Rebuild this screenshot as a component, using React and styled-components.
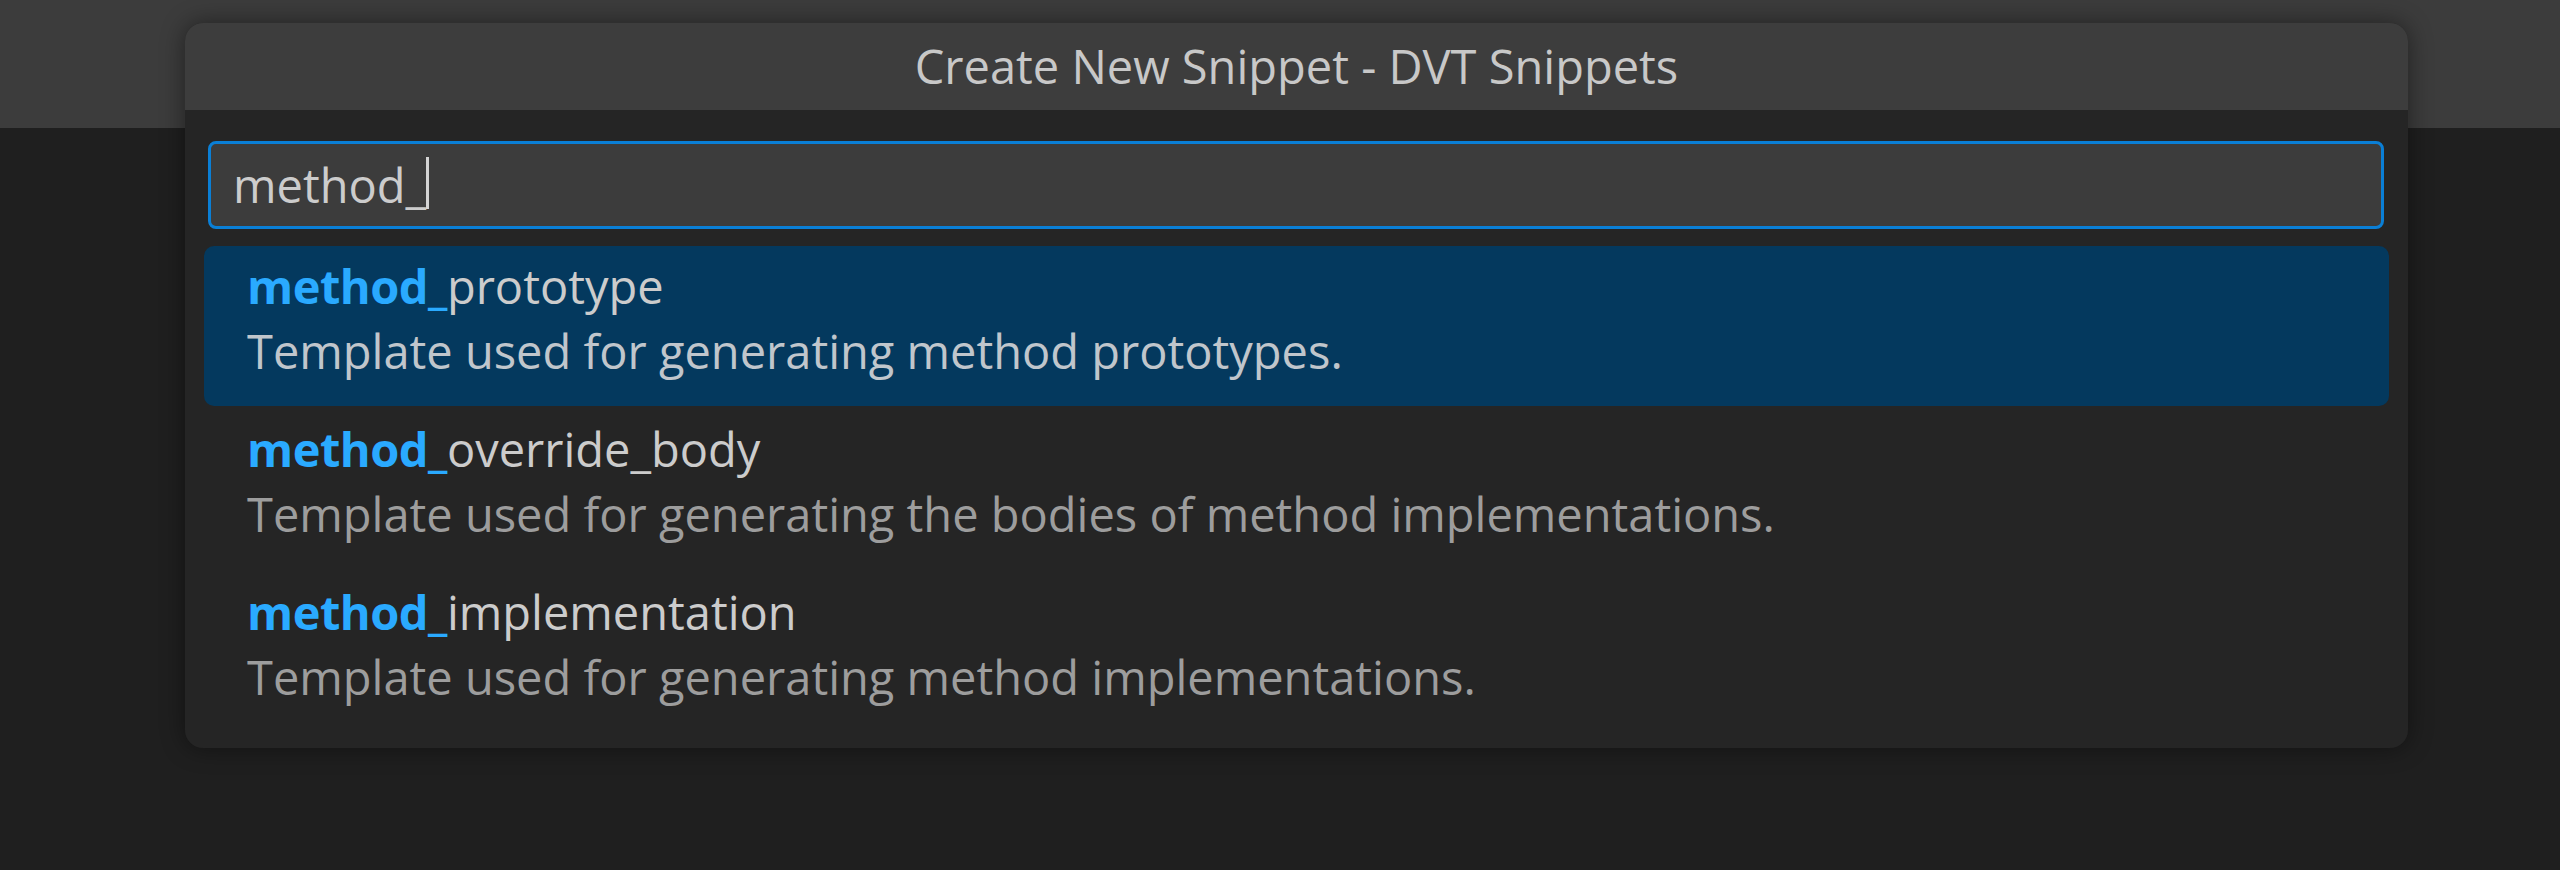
import React from 'react';
import styled, { createGlobalStyle } from 'styled-components';

const GlobalStyle = createGlobalStyle`
  html, body {
    margin: 0;
    padding: 0;
    background: #1f1f1f;
  }
  body {
    font-family: "Open Sans", "Noto Sans", sans-serif;
  }
`;

const Workbench = styled.div`
  position: relative;
  width: 2560px;
  height: 870px;
  display: flex;
  flex-direction: column;
  overflow: hidden;
`;

const TitleBar = styled.div`
  height: 128px;
  background: #3c3c3c;
`;

const Editor = styled.div`
  flex: 1;
  background: #1f1f1f;
`;

const QuickInput = styled.div`
  position: absolute;
  top: 23px;
  left: 185px;
  width: 2223px;
  height: 725px;
  display: flex;
  flex-direction: column;
  background: #252525;
  border-radius: 18px;
  overflow: hidden;
  box-shadow: 0 0 24px rgba(0, 0, 0, 0.45);
`;

const Header = styled.div`
  height: 87px;
  line-height: 87px;
  background: #3d3d3d;
  color: #c8c8c8;
  font-size: 47px;
  text-align: center;
`;

const Body = styled.div`
  display: flex;
  flex-direction: column;
  padding: 31px 19px 0 19px;
`;

const InputBox = styled.div`
  height: 82px;
  margin: 0 5px 17px 4px;
  display: flex;
  align-items: center;
  padding-left: 22px;
  background: #3c3c3c;
  border: 3px solid #0a7fd6;
  border-radius: 8px;
  color: #cccccc;
  font-size: 47px;
  line-height: 82px;
`;

const Caret = styled.span`
  display: inline-block;
  width: 3px;
  height: 52px;
  margin-top: -4px;
  background: #d4d4d4;
`;

const List = styled.div`
  display: flex;
  flex-direction: column;
  gap: 3px;
`;

const Row = styled.div`
  height: 160px;
  box-sizing: border-box;
  padding: 8px 0 0 43px;
  border-radius: 10px;
  background: ${p => (p.$selected ? '#04395e' : 'transparent')};
  font-size: 47px;
  line-height: 65px;
  white-space: nowrap;
`;

const Label = styled.div`
  color: #cccccc;
`;

const Match = styled.span`
  color: #2aaaff;
  font-weight: 700;
  letter-spacing: -0.5px;
`;

const Detail = styled.div`
  color: ${p => (p.$selected ? '#c0c6cc' : '#9d9d9d')};
`;

const items = [
  { rest: 'prototype', detail: 'Template used for generating method prototypes.' },
  { rest: 'override_body', detail: 'Template used for generating the bodies of method implementations.' },
  { rest: 'implementation', detail: 'Template used for generating method implementations.' },
];

export default function App() {
  return (
    <Workbench>
      <GlobalStyle />
      <TitleBar />
      <Editor />
      <QuickInput>
        <Header>Create New Snippet - DVT Snippets</Header>
        <Body>
          <InputBox>
            method_<Caret />
          </InputBox>
          <List>
            {items.map((item, i) => (
              <Row key={item.rest} $selected={i === 0}>
                <Label>
                  <Match>method_</Match>
                  {item.rest}
                </Label>
                <Detail $selected={i === 0}>{item.detail}</Detail>
              </Row>
            ))}
          </List>
        </Body>
      </QuickInput>
    </Workbench>
  );
}
